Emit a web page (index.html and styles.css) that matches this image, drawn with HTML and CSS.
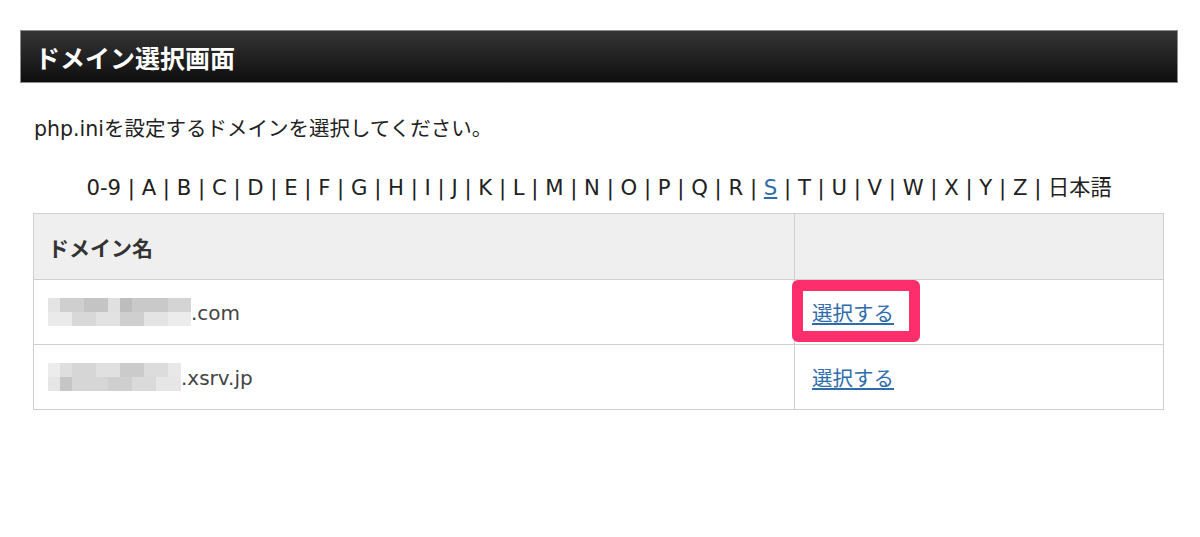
FILE: index.html
```html
<!DOCTYPE html>
<html lang="ja">
<head>
    <meta charset="UTF-8">
    <meta name="viewport" content="width=device-width, initial-scale=1.0">
    <title>ドメイン選択画面</title>
    <link rel="stylesheet" href="styles.css">
</head>
<body>

<div class="page">
    <h1 class="title-bar">ドメイン選択画面</h1>

    <p class="lead">php.iniを設定するドメインを選択してください。</p>

    <div class="letters">
        0-9 | A | B | C | D | E | F | G | H | I | J | K | L | M | N | O | P | Q | R | <a href="#">S</a> | T | U | V | W | X | Y | Z | 日本語
    </div>

    <table class="domains">
        <tr>
            <th class="col-name">ドメイン名</th>
            <th></th>
        </tr>
        <tr>
            <td><span class="mosaic"></span>.com</td>
            <td><span class="highlight"><a href="#">選択する</a></span></td>
        </tr>
        <tr>
            <td><span class="mosaic short"></span>.xsrv.jp</td>
            <td><a href="#">選択する</a></td>
        </tr>
    </table>
</div>

</body>
</html>
```

FILE: styles.css
```css
* {
    box-sizing: border-box;
    margin: 0;
    padding: 0;
}
body {
    font-family: "DejaVu Sans", "Noto Sans CJK JP", sans-serif;
    background-color: #ffffff;
    color: #222;
}
.page {
    padding: 30px 22px 0 20px;
}
.title-bar {
    display: flex;
    align-items: center;
    height: 53px;
    padding-left: 14px;
    border: 1px solid #8c8c8c;
    background: linear-gradient(#353535, #0e0e0e);
    color: #fff;
    font-size: 25px;
    font-weight: bold;
    font-family: "Noto Sans CJK JP", sans-serif;
}
.lead {
    margin: 32px 0 0 14px;
    font-size: 20.5px;
    line-height: 28px;
}
.letters {
    margin-top: 31px;
    text-align: center;
    font-size: 21.2px;
    line-height: 28px;
}
a {
    color: #2f6cae;
    text-decoration: underline;
}
.domains {
    width: 1131px;
    margin: 11px 0 0 13px;
    border-collapse: collapse;
    font-size: 20px;
}
.domains th,
.domains td {
    height: 65px;
    border: 1px solid #cfcfcf;
    text-align: left;
    padding: 0 16px 0 14px;
    vertical-align: middle;
}
.domains th {
    height: 66px;
    background-color: #efefef;
    font-size: 21px;
    color: #333;
    font-family: "Noto Sans CJK JP", sans-serif;
}
.domains .col-name {
    width: 761px;
}
.domains td {
    color: #444;
}
.domains td a {
    font-size: 20.5px;
    font-family: "Noto Sans CJK JP", sans-serif;
}
.domains td:last-child {
    padding-left: 17px;
}
.mosaic {
    display: inline-block;
    width: 143px;
    height: 28px;
    vertical-align: -6px;
    background:
        linear-gradient(to right, #e4e4e4 0 12px, #cfcfcf 12px 36px, #c4c4c4 36px 60px, #e0e0e0 60px 72px, #bdbdbd 72px 84px, #c9c9c9 84px 120px, #d4d4d4 120px 143px) top / 100% 50% no-repeat,
        linear-gradient(to right, #eaeaea 0 24px, #d8d8d8 24px 48px, #e2e2e2 48px 72px, #cfcfcf 72px 96px, #e4e4e4 96px 120px, #ececec 120px 143px) bottom / 100% 50% no-repeat;
}
.mosaic.short {
    width: 133px;
    background:
        linear-gradient(to right, #ececec 0 12px, #dedede 12px 24px, #d6d6d6 24px 48px, #e0e0e0 48px 72px, #cbcbcb 72px 96px, #dcdcdc 96px 120px, #e8e8e8 120px 133px) top / 100% 50% no-repeat,
        linear-gradient(to right, #e6e6e6 0 12px, #c6c6c6 12px 24px, #d6d6d6 24px 60px, #cfcfcf 60px 84px, #dadada 84px 108px, #e6e6e6 108px 133px) bottom / 100% 50% no-repeat;
}
.highlight {
    position: relative;
    display: inline-block;
    padding: 0 15px 0 9px;
    margin-left: -9px;
}
.highlight::before {
    content: "";
    position: absolute;
    left: -11px;
    right: -11px;
    top: -17px;
    bottom: -15px;
    border: 11px solid #fe2d6b;
    border-radius: 6px;
}
```
